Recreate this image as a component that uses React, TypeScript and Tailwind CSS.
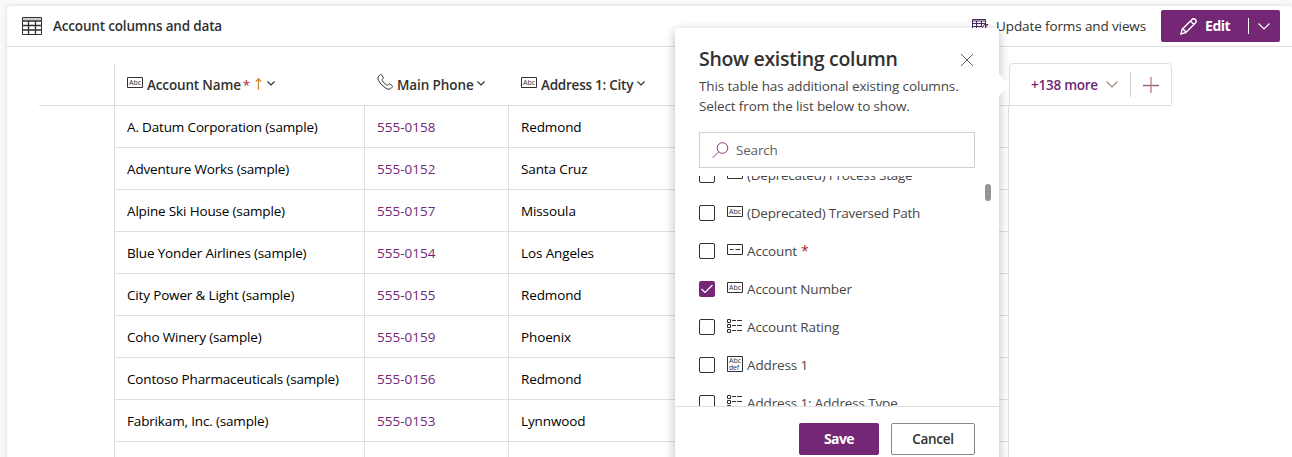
import React from "react";

const rows = [
  ["A. Datum Corporation (sample)", "555-0158", "Redmond"],
  ["Adventure Works (sample)", "555-0152", "Santa Cruz"],
  ["Alpine Ski House (sample)", "555-0157", "Missoula"],
  ["Blue Yonder Airlines (sample)", "555-0154", "Los Angeles"],
  ["City Power & Light (sample)", "555-0155", "Redmond"],
  ["Coho Winery (sample)", "555-0159", "Phoenix"],
  ["Contoso Pharmaceuticals (sample)", "555-0156", "Redmond"],
  ["Fabrikam, Inc. (sample)", "555-0153", "Lynnwood"],
  ["", "", ""],
];

type Kind = "abc" | "dash" | "list" | "memo";

const options: { label: string; kind: Kind; checked?: boolean; required?: boolean }[] = [
  { label: "(Deprecated) Process Stage", kind: "dash" },
  { label: "(Deprecated) Traversed Path", kind: "abc" },
  { label: "Account", kind: "dash", required: true },
  { label: "Account Number", kind: "abc", checked: true },
  { label: "Account Rating", kind: "list" },
  { label: "Address 1", kind: "memo" },
  { label: "Address 1: Address Type", kind: "list" },
];

function TypeIcon({ kind }: { kind: Kind }) {
  return (
    <svg width="16" height="16" viewBox="0 0 16 16" fill="none" stroke="currentColor" className="shrink-0">
      {kind === "abc" && (
        <>
          <path d="M.5 2.5h15v10H.5z" />
          <text x="2" y="10" fontSize="7" fontWeight="400" textLength="12" stroke="none" fill="currentColor">Abc</text>
        </>
      )}
      {kind === "dash" && (
        <>
          <path d="M.5 2.5h15v10H.5z" />
          <path d="M3 7.5h3.5M8.5 7.5H13" />
        </>
      )}
      {kind === "list" && (
        <path d="M.5 1.5h3v3h-3zM.5 6.5h3v3h-3zM.5 11.5h3v3h-3zM5 2.5h4M10 2.5h5M5 7.5h4M10 7.5h5M5 12.5h4M10 12.5h5" />
      )}
      {kind === "memo" && (
        <>
          <path d="M.5 .5h15v15H.5z" />
          <text x="2" y="7" fontSize="7" textLength="12" stroke="none" fill="currentColor">Abc</text>
          <text x="2" y="14" fontSize="7" textLength="10" stroke="none" fill="currentColor">def</text>
        </>
      )}
    </svg>
  );
}

function Chevron({ size = 8, className = "" }: { size?: number; className?: string }) {
  return (
    <svg width={size} height={size / 2 + 1} viewBox={`0 0 ${size} ${size / 2 + 1}`} fill="none" stroke="currentColor" strokeWidth="1.15" className={className}>
      <path d={`M.5 .5L${size / 2} ${size / 2}L${size - 0.5} .5`} />
    </svg>
  );
}

function TopBar() {
  return (
    <div className="flex h-[41px] shrink-0 items-center border-b border-[#e1dfdd] pl-[15px] pr-3">
      <svg width="20" height="18" viewBox="0 0 20 18" fill="none" stroke="#323130" className="shrink-0">
        <path d="M.5 .5h19v17H.5z" />
        <path d="M1 4h18M1 8.500h18M1 13h18M6.500 4v14M13.500 4v14" strokeWidth="1.3" />
        <path d="M1 2h18" stroke="#a19f9d" />
      </svg>
      <span className="ml-[11px] text-[13.5px] font-semibold tracking-[-0.17px]">Account columns and data</span>
      <svg width="17" height="15" viewBox="0 0 17 15" fill="none" stroke="#4b2a5c" className="ml-auto">
        <path d="M.5 .5h13v9H.5zM.5 2h13M.5 4.500h13M.5 7.500h10M4.500 2v8M9.500 2v6" />
        <path d="M9.500 10L13 4.500M12.500 5.500h3.500l-3.500 4H16" stroke="#742774" />
      </svg>
      <span className="ml-[7px] text-[13.5px] tracking-[-0.12px]">Update forms and views</span>
      <div className="ml-[15px] flex h-8 w-[119px] items-center rounded-[2px] bg-[#742774] text-white">
        <svg width="17" height="17" viewBox="0 0 17 17" fill="none" stroke="white" strokeWidth="1.4" className="ml-[19px]">
          <path d="M1 16l1.2-4.8L12 1.500a2.300 2.300 0 0 1 3.400 3.400L5.700 14.700zM10.500 3l3.400 3.400M2.200 11.200c2 .2 3.200 1.500 3.500 3.500" />
        </svg>
        <span className="ml-[8px] text-sm font-bold tracking-[-0.45px]">Edit</span>
        <span className="ml-auto h-4 w-px bg-white" />
        <Chevron size={12} className="ml-[9px] mr-[10px]" />
      </div>
    </div>
  );
}

function GridHeader() {
  return (
    <div className="flex h-[43px] w-[1133px] border-b border-[#e1dfdd] text-[13.5px] font-semibold text-[#323130]">
      <div className="w-[75px]" />
      <div className="flex w-[250px] items-center border-l border-[#e1dfdd] pl-3 pt-[2px]">
        <span className="mb-[5px]"><TypeIcon kind="abc" /></span>
        <span className="ml-1 tracking-[-0.15px]">Account Name</span>
        <span className="ml-[2px] font-normal text-[#a4262c]">*</span>
        <svg width="7" height="12" viewBox="0 0 7 12" fill="none" stroke="#cf8a35" strokeWidth="1.3" className="mb-[2px] ml-[5px]">
          <path d="M3.500 12V1M.8 3.500L3.500 .8l2.700 2.700" />
        </svg>
        <Chevron className="mb-[3px] ml-[5px]" />
      </div>
      <div className="flex w-[144px] items-center pl-[13px] pt-[2px]">
        <svg width="16" height="17" viewBox="0 0 16 17" fill="none" stroke="currentColor" className="mb-[5px]">
          <path d="M3.2.8c.6-.5 1.3-.3 1.7.3l1.2 2c.4.7.2 1.2-.3 1.7-.8.8-.8 1.4-.2 2.3a13 13 0 0 0 3.6 3.6c.9.6 1.5.5 2.2-.2.5-.5 1-.7 1.7-.3l1.8 1.3c.7.5.7 1.1.2 1.7-1.7 2.2-3.4 2.6-6 1.2A20 20 0 0 1 1.500 6.600C.2 4 1 2.300 3.200.8z" />
        </svg>
        <span className="ml-1 tracking-[-0.1px]">Main Phone</span>
        <Chevron className="mb-[3px] ml-[3px]" />
      </div>
      <div className="flex w-[501px] items-center pl-[13px] pt-[2px]">
        <span className="mb-[5px]"><TypeIcon kind="abc" /></span>
        <span className="ml-1 tracking-[-0.24px]">Address 1: City</span>
        <Chevron className="mb-[3px] ml-[4px]" />
      </div>
      <div className="flex h-[43px] w-[163px] items-center rounded-t-[4px] border border-[#e1dfdd] pl-[21px] text-[#742774]">
        <span className="pt-[2px] tracking-[-0.25px]">+138 more</span>
        <Chevron size={12} className="ml-2 text-[#a08468]" />
        <span className="ml-[12px] h-[25px] w-px bg-[#d2d0ce]" />
        <svg width="16" height="16" viewBox="0 0 16 16" className="ml-3">
          <path d="M0 8.500h16" stroke="#8f5580" strokeWidth="1.3" />
          <path d="M8 0v16" stroke="#c07a72" strokeWidth="1.3" />
        </svg>
      </div>
    </div>
  );
}

function GridRows() {
  return (
    <div className="ml-[75px] w-[895px] border-x border-[#e1dfdd] text-[13.5px] text-black">
      {rows.map(([name, phone, city], i) => (
        <div key={i} className="flex h-[42px] border-b border-[#e1dfdd] leading-[43px]">
          <div className="w-[250px] border-r border-[#e1dfdd] pl-3 tracking-[-0.16px]">{name}</div>
          <div className="w-[144px] border-r border-[#e1dfdd] pl-3 text-[#742774]">{phone}</div>
          <div className="pl-3 tracking-[-0.12px]">{city}</div>
        </div>
      ))}
    </div>
  );
}

function ColumnPicker() {
  return (
    <div className="absolute left-[675px] top-[28px] flex h-[445px] w-[324px] flex-col rounded-[2px] bg-white text-[#323130] shadow-[0_6px_14px_rgba(0,0,0,0.13),0_1px_8px_rgba(0,0,0,0.16)]">
      <svg width="10" height="22" viewBox="0 0 10 22" className="absolute -right-[10px] top-[46px]">
        <path d="M0 0l10 11L0 22z" fill="white" />
      </svg>
      <div className="flex h-[104px] shrink-0 flex-col px-6 pt-[17px]">
        <div className="flex h-7 items-center justify-between">
          <h2 className="text-[19.5px] font-semibold tracking-[-0.3px]">Show existing column</h2>
          <svg width="14" height="14" viewBox="0 0 14 14" stroke="#605e5c" className="mr-[1px] mt-[2px]">
            <path d="M1 1l12 12M13 1L1 13" />
          </svg>
        </div>
        <p className="mt-[3px] whitespace-nowrap text-[13.5px] leading-5 tracking-[-0.13px] text-[#484644]">
          This table has additional existing columns.<br />Select from the list below to show.
        </p>
      </div>
      <div className="mx-6 flex h-9 shrink-0 items-center border border-[#d2d0ce] pl-3 text-[13.5px] text-[#605e5c]">
        <svg width="17" height="17" viewBox="0 0 17 17" fill="none" stroke="#8a408a">
          <circle cx="10.500" cy="6" r="5.300" /><path d="M6.700 9.800L.5 16" />
        </svg>
        <span className="ml-[7px] tracking-[-0.2px]">Search</span>
      </div>
      <div className="mt-2 flex h-[230px] shrink-0 flex-col overflow-hidden">
        <div className="-mt-[20px] flex flex-col">
          {options.map((o) => (
            <div key={o.label} className="flex h-[38px] shrink-0 items-center pl-6">
              <span className={o.checked ? "flex h-4 w-4 items-center justify-center rounded-[2px] bg-[#742774]" : "h-4 w-4 rounded-[2px] border border-[#323130]"}>
                {o.checked && (
                  <svg width="12" height="10" viewBox="0 0 12 10" fill="none" stroke="white" strokeWidth="1.2"><path d="M.5 5L4 8.500 11.500 1" /></svg>
                )}
              </span>
              <span className={o.kind === "memo" ? "mb-[2px] ml-3" : "mb-[3px] ml-3"}><TypeIcon kind={o.kind} /></span>
              <span className={o.label.startsWith("(") ? "ml-1 text-[13.5px] tracking-[-0.24px] text-[#484644]" : "ml-1 text-[13.5px] tracking-[-0.14px] text-[#484644]"}>{o.label}</span>
              {o.required && <span className="ml-1 text-sm text-[#a4262c]">*</span>}
            </div>
          ))}
        </div>
      </div>
      <span className="absolute right-2 top-[156px] h-[17px] w-[6px] rounded-full bg-[#979593]" />
      <div className="flex flex-1 justify-end gap-3 border-t border-[#e1dfdd] px-6 pt-4 text-sm">
        <button className="h-8 w-20 rounded-[2px] bg-[#742774] font-bold tracking-[-0.6px] text-white">Save</button>
        <button className="h-8 w-[84px] rounded-[2px] border border-[#8a8886] pt-[2px] text-[13.5px] font-semibold tracking-[-0.3px]">Cancel</button>
      </div>
    </div>
  );
}

export default function App() {
  return (
    <div className="relative h-[457px] w-[1292px] overflow-hidden bg-[#faf9f8] pl-[7px] pt-[6px] font-['Open_Sans','Noto_Sans',sans-serif] text-[#323130]">
      <div className="flex h-[480px] flex-col rounded-t-[4px] bg-white shadow-[0_0_5px_rgba(0,0,0,0.13)]">
        <TopBar />
        <div className="pl-8 pt-4">
          <GridHeader />
          <GridRows />
        </div>
      </div>
      <ColumnPicker />
    </div>
  );
}
